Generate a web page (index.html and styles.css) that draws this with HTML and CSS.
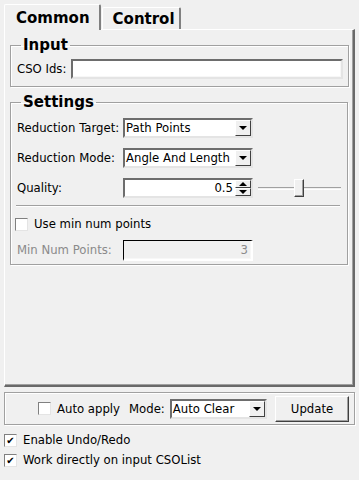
FILE: index.html
```html
<!DOCTYPE html>
<html lang="en">
  <head>
    <meta charset="UTF-8" />
    <title>CSO Reduce</title>
    <link rel="stylesheet" href="styles.css">
  </head>
  <body>
    <div class="tabs">
      <div class="tab tab-active">Common</div>
      <div class="tab">Control</div>
    </div>
    <div class="pane">
      <fieldset class="group group-input">
        <legend>Input</legend>
        <div class="row">
          <label class="lbl-short">CSO Ids:</label>
          <div class="field field-wide"></div>
        </div>
      </fieldset>

      <fieldset class="group group-settings">
        <legend>Settings</legend>
        <div class="row">
          <label class="lbl">Reduction Target:</label>
          <div class="combo">
            <span class="combo-text">Path Points</span>
            <span class="combo-btn"><span class="arrow-down"></span></span>
          </div>
        </div>
        <div class="row">
          <label class="lbl">Reduction Mode:</label>
          <div class="combo">
            <span class="combo-text">Angle And Length</span>
            <span class="combo-btn"><span class="arrow-down"></span></span>
          </div>
        </div>
        <div class="row">
          <label class="lbl">Quality:</label>
          <div class="spin">
            <span class="spin-text">0.5</span>
            <span class="spin-btns">
              <span class="spin-btn"><span class="arrow-up"></span></span>
              <span class="spin-btn"><span class="arrow-down"></span></span>
            </span>
          </div>
          <div class="slider">
            <div class="slider-track"></div>
            <div class="slider-handle"></div>
          </div>
        </div>
        <div class="separator"></div>
        <div class="check-row check-min">
          <span class="check"></span>
          <span>Use min num points</span>
        </div>
        <div class="row row-last">
          <label class="lbl disabled">Min Num Points:</label>
          <div class="field field-disabled">3</div>
        </div>
      </fieldset>
    </div>

    <div class="bottom-bar">
      <div class="check-row">
        <span class="check"></span>
        <span>Auto apply</span>
      </div>
      <span class="mode-lbl">Mode:</span>
      <div class="combo combo-mode">
        <span class="combo-text">Auto Clear</span>
        <span class="combo-btn"><span class="arrow-down"></span></span>
      </div>
      <button class="btn">Update</button>
    </div>

    <div class="check-row outer-check">
      <span class="check checked">&#10004;</span>
      <span>Enable Undo/Redo</span>
    </div>
    <div class="check-row outer-check">
      <span class="check checked">&#10004;</span>
      <span>Work directly on input CSOList</span>
    </div>
  </body>
</html>
```

FILE: styles.css
```css
body {
  margin: 0;
  width: 359px;
  height: 480px;
  background-color: #f0f0f0;
  font-family: Tahoma, "DejaVu Sans", sans-serif;
  font-size: 11.7px;
  color: #000;
  overflow: hidden;
}

.tabs {
  display: flex;
  align-items: flex-end;
  height: 29px;
  padding-left: 4px;
}
.tab {
  height: 21px;
  padding: 0 4px 0 10px;
  margin-left: 1px;
  font-family: "DejaVu Sans", sans-serif;
  font-weight: bold;
  font-size: 15px;
  line-height: 22px;
  border-top: 1px solid #fff;
  border-left: 1px solid #fff;
  border-right: 2px solid #808080;
  border-radius: 2px 2px 0 0;
}
.tab-active {
  height: 25px;
  margin-left: 0;
  line-height: 26px;
  position: relative;
  z-index: 1;
  padding: 0 9px 0 11px;
  margin-bottom: -1px;
  background-color: #f0f0f0;
}

.pane {
  margin: 0 4px;
  height: 348px;
  padding: 7px 5px 0 5px;
  border-top: 1px solid #fff;
  border-left: 1px solid #fff;
  border-right: 2px solid #696969;
  border-bottom: 2px solid #696969;
  box-shadow: inset -1px -1px 0 #a0a0a0;
}

.group {
  margin: 0;
  padding: 4px 5px 5px 5px;
  border: 1px solid #a0a0a0;
  box-shadow: 1px 1px 0 #fff, inset 1px 1px 0 #fff;
}
.group legend {
  font-family: "DejaVu Sans", sans-serif;
  font-weight: bold;
  font-size: 15px;
  line-height: 16px;
  padding: 0 2px;
  margin-left: 5px;
}
.group-input {
  padding-top: 6px;
  padding-bottom: 7px;
}
.group-settings {
  margin-top: 7px;
  padding-top: 8px;
  padding-bottom: 4px;
}

.row {
  display: flex;
  align-items: center;
  height: 20px;
  margin-bottom: 10px;
}
.group-input .row,
.row-last {
  margin-bottom: 0;
}
.lbl-short {
  flex-shrink: 0;
  width: 54px;
  padding-left: 1px;
}
.lbl {
  flex-shrink: 0;
  width: 106px;
  padding-left: 1px;
}
.disabled {
  color: #8a8a8a;
}

.field {
  height: 16px;
  line-height: 16px;
  background-color: #fff;
  border-top: 2px solid #6d6d6d;
  border-left: 2px solid #6d6d6d;
  border-right: 2px solid #e4e4e4;
  border-bottom: 2px solid #e4e4e4;
  box-shadow: inset -1px -1px 0 #f7f7f7;
}
.field-wide {
  width: 268px;
}
.field-disabled {
  width: 124px;
  padding-right: 3px;
  text-align: right;
  color: #8a8a8a;
  background-color: #f0f0f0;
  border-top-color: #000;
  border-left-color: #000;
  border-right-color: #fff;
  border-bottom-color: #fff;
  border-top-width: 1px;
  border-left-width: 1px;
  height: 18px;
  line-height: 18px;
}

.combo,
.spin {
  display: flex;
  flex-shrink: 0;
  width: 126px;
  height: 16px;
  background-color: #fff;
  border-top: 2px solid #6d6d6d;
  border-left: 2px solid #6d6d6d;
  border-right: 2px solid #e4e4e4;
  border-bottom: 2px solid #e4e4e4;
}
.combo-text {
  flex: 1;
  padding-left: 1px;
  line-height: 16px;
  white-space: nowrap;
  overflow: hidden;
}
.combo-btn {
  width: 14px;
  height: 14px;
  display: flex;
  align-items: center;
  justify-content: center;
  background-color: #f0f0f0;
  border-top: 1px solid #fff;
  border-left: 1px solid #fff;
  border-right: 1px solid #404040;
  border-bottom: 1px solid #404040;
}
.arrow-down {
  width: 0;
  height: 0;
  border-left: 4px solid transparent;
  border-right: 4px solid transparent;
  border-top: 4px solid #000;
}
.arrow-up {
  width: 0;
  height: 0;
  border-left: 4px solid transparent;
  border-right: 4px solid transparent;
  border-bottom: 4px solid #000;
}
.spin-text {
  flex: 1;
  text-align: right;
  padding-right: 2px;
  line-height: 16px;
}
.spin-btns {
  display: flex;
  flex-direction: column;
  width: 16px;
}
.spin-btn {
  flex: 1;
  display: flex;
  align-items: center;
  justify-content: center;
  background-color: #f0f0f0;
  border-top: 1px solid #fff;
  border-left: 1px solid #fff;
  border-right: 1px solid #404040;
  border-bottom: 1px solid #404040;
}

.slider {
  position: relative;
  width: 83px;
  height: 18px;
  margin-left: 5px;
}
.slider-track {
  position: absolute;
  left: 0;
  right: 0;
  top: 8px;
  height: 1px;
  border-top: 1px solid #a0a0a0;
  border-bottom: 1px solid #fff;
}
.slider-handle {
  position: absolute;
  left: 36px;
  top: 0;
  width: 8px;
  height: 16px;
  background-color: #f0f0f0;
  border-top: 1px solid #fff;
  border-left: 1px solid #fff;
  border-right: 1px solid #404040;
  border-bottom: 1px solid #404040;
  box-shadow: inset -1px -1px 0 #a0a0a0;
}

.separator {
  height: 0;
  margin: -3px 2px 10px 0;
  border-top: 1px solid #a0a0a0;
  border-bottom: 1px solid #fff;
}

.check-row {
  display: flex;
  align-items: center;
  height: 14px;
  margin-bottom: 9px;
}
.check-min {
  margin-left: -1px;
}
.check {
  width: 11px;
  height: 11px;
  margin-right: 6px;
  background-color: #fff;
  border-top: 1px solid #808080;
  border-left: 1px solid #808080;
  border-right: 1px solid #e4e4e4;
  border-bottom: 1px solid #e4e4e4;
  font-size: 10px;
  line-height: 11px;
  text-align: center;
  font-family: "DejaVu Sans", sans-serif;
}

.bottom-bar {
  display: flex;
  align-items: center;
  margin: 5px 4px 0 4px;
  height: 31px;
  padding: 0 5px 0 33px;
  border: 1px solid #a0a0a0;
  box-shadow: inset 1px 1px 0 #fff, 1px 1px 0 #fff;
}
.bottom-bar .check-row {
  margin-bottom: 0;
}
.mode-lbl {
  margin-left: 9px;
  margin-right: 5px;
}
.combo-mode {
  width: 93px;
}
.btn {
  margin-left: auto;
  width: 74px;
  height: 26px;
  font-family: Tahoma, "DejaVu Sans", sans-serif;
  font-size: 11.7px;
  background-color: #f0f0f0;
  border-top: 1px solid #fff;
  border-left: 1px solid #fff;
  border-right: 1px solid #404040;
  border-bottom: 1px solid #404040;
  box-shadow: inset -1px -1px 0 #a0a0a0;
}

.outer-check {
  margin: 0 0 6px 4px;
  height: 14px;
}
.bottom-bar + .outer-check {
  margin-top: 8px;
}
```
